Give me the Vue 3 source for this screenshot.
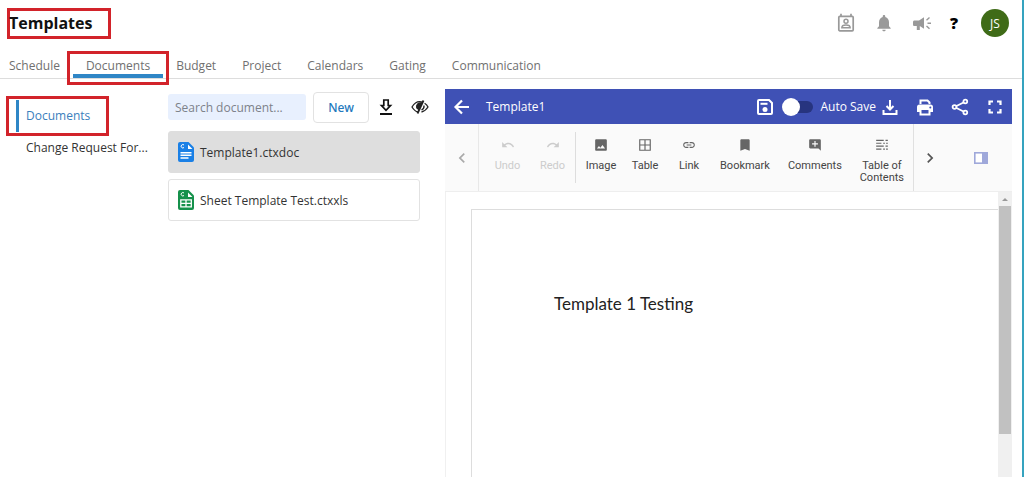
<script setup>
import { ref } from 'vue'

const tabs = ['Schedule', 'Documents', 'Budget', 'Project', 'Calendars', 'Gating', 'Communication']
const activeTab = ref('Documents')
const sections = ['Documents', 'Change Request For...']
const activeSection = ref('Documents')
const files = [
  { name: 'Template1.ctxdoc', type: 'doc' },
  { name: 'Sheet Template Test.ctxxls', type: 'sheet' },
]
const selected = ref('Template1.ctxdoc')
const search = ref('')
const autoSave = ref(false)

const history = [
  { label: 'Undo', path: 'M12.5 8c-2.65 0-5.05.99-6.9 2.6L2 7v9h9l-3.62-3.62c1.39-1.16 3.16-1.88 5.12-1.88 3.54 0 6.55 2.31 7.6 5.5l2.37-.78C21.08 11.03 17.15 8 12.5 8z' },
  { label: 'Redo', path: 'M18.4 10.6C16.55 8.99 14.15 8 11.5 8c-4.65 0-8.58 3.03-9.96 7.22L3.9 16c1.05-3.19 4.05-5.5 7.6-5.5 1.95 0 3.73.72 5.12 1.88L13 16h9V7l-3.6 3.6z' },
]
const tools = [
  { label: 'Image', narrow: true, path: 'M22 20V4c0-1.1-.9-2-2-2H4c-1.100 0-2 .9-2 2v16c0 1.100.9 2 2 2h16c1.100 0 2-.9 2-2zM8.500 13.500l2.500 3.010L14.500 12l4.500 6H5l3.500-4.500z' },
  { label: 'Table', narrow: true, path: 'M2 2h20v20H2V2zm2 2v7h7V4H4zm9 0v7h7V4h-7zm-9 9v7h7v-7H4zm9 0v7h7v-7h-7z' },
  { label: 'Link', narrow: true, path: 'M3.9 12c0-1.71 1.39-3.1 3.1-3.1h4V7H7c-2.76 0-5 2.24-5 5s2.24 5 5 5h4v-1.9H7c-1.71 0-3.1-1.39-3.1-3.1zM8 13h8v-2H8v2zm9-6h-4v1.9h4c1.71 0 3.1 1.39 3.1 3.1s-1.39 3.1-3.1 3.1h-4V17h4c2.76 0 5-2.24 5-5s-2.24-5-5-5z' },
  { label: 'Bookmark', path: 'M18 2H6c-1.100 0-2 .9-2 2v18l8-3 8 3V4c0-1.100-.9-2-2-2z' },
  { label: 'Comments', path: 'M22 4c0-1.1-.9-2-2-2H4c-1.1 0-2 .9-2 2v12c0 1.1.9 2 2 2h14l4 4V4zm-5 7h-4v4h-2v-4H7V9h4V5h2v4h4v2z' },
  { label: 'Table of Contents', path: 'M2 3h13v2H2zM2 8h9v2H2zM2 13h13v2H2zM2 18h9v2H2zM18 3h4v2h-4zM14 8h3v2h-3zM19 8h3v2h-3zM18 13h4v2h-4zM14 18h3v2h-3zM19 18h3v2h-3z' },
]
</script>

<template>
  <div class="app">
    <header class="top">
      <h1 class="title">Templates</h1>
      <div class="actions">
        <button type="button" aria-label="Contacts">
          <svg width="18" height="20" viewBox="0 0 18 20" fill="none" stroke="#999" stroke-width="1.7">
            <rect x="1.8" y="3.4" width="14.4" height="14.4" rx="1" />
            <path d="M4 0.8v3M14 0.8v3" />
            <circle cx="9" cy="8.2" r="2" stroke-width="1.5" />
            <path d="M4.8 14.7c0-3.6 8.4-3.6 8.4 0z" stroke-width="1.4" />
          </svg>
        </button>
        <button type="button" aria-label="Notifications">
          <svg width="20" height="20" viewBox="0 0 24 24" fill="#999"><path d="M12 22c1.1 0 2-.9 2-2h-4c0 1.1.9 2 2 2zm6-6v-5c0-3.07-1.63-5.64-4.5-6.32V4c0-.83-.67-1.5-1.5-1.5s-1.5.67-1.5 1.5v.68C7.64 5.36 6 7.92 6 11v5l-2 2v1h16v-1l-2-2z" /></svg>
        </button>
        <button type="button" aria-label="Announcements">
          <svg width="20" height="20" viewBox="0 0 20 20" fill="#999"><path d="M2.5 7.4H7l5-3.2v11.6L7.800 13v4H4.800v-4H2.500C1.600 13 1 12.300 1 11.400V9c0-.9.6-1.600 1.500-1.600z" /><path d="M14.500 7.200l3-2.700M15.500 10.200H19M14.500 13l3 2.700" stroke="#999" stroke-width="1.400" /></svg>
        </button>
        <button type="button" class="help" aria-label="Help">?</button>
        <button type="button" class="avatar" aria-label="Account">JS</button>
      </div>
    </header>

    <nav class="tabs" aria-label="Template types">
      <a v-for="t in tabs" :key="t" href="#" :class="{ active: t === activeTab }" @click.prevent="activeTab = t">{{ t }}</a>
    </nav>

    <main class="body">
      <nav class="side" aria-label="Sections">
        <a v-for="s in sections" :key="s" href="#" :class="{ active: s === activeSection }" @click.prevent="activeSection = s"><span>{{ s }}</span></a>
      </nav>

      <section class="list">
        <div class="list-bar">
          <input v-model="search" type="text" placeholder="Search document..." aria-label="Search document" />
          <button type="button" class="new">New</button>
          <button type="button" class="plain" aria-label="Import">
            <svg width="16" height="18" viewBox="0 0 16 18" fill="none" stroke="#111"><path d="M5.800 2h4.400v5.500h2.300L8 12.300 3.500 7.500h2.300z" stroke-width="1.700" /><path d="M2 16h12" stroke-width="2" /></svg>
          </button>
          <button type="button" class="plain" aria-label="Toggle hidden">
            <svg width="18" height="16" viewBox="0 0 18 16" fill="none" stroke="#222" stroke-width="1.300"><path d="M7 13C4.500 12.500 2.500 10.500 1 8c3-5 7.500-6 11-4.600M13.600 4.200C15.200 5.200 16.300 6.500 17 8c-1.500 2.600-3.500 4.200-6.500 5" /><path d="M12.500 1.500L6.500 14.500" stroke-width="1.800" /><path d="M10.500 4C7 3.500 5 6 5.800 9l1.800 1.500z" fill="#222" /><path d="M13 6.500c.3 2-.8 3.600-2.500 4.300" /></svg>
          </button>
        </div>
        <ul>
          <li v-for="f in files" :key="f.name">
            <button type="button" class="file" :class="{ selected: f.name === selected }" @click="selected = f.name">
              <svg width="18" height="20" viewBox="0 0 18 20">
                <path d="M3 0h8.500L17 5.500V18a2 2 0 0 1-2 2H3a2 2 0 0 1-2-2V2a2 2 0 0 1 2-2z" :fill="f.type === 'doc' ? '#1a80e6' : '#15914b'" />
                <path d="M11 2.600V7h4.400z" fill="#fff" />
                <path d="M7 3A1.700 1.700 0 1 0 7 5.500" fill="none" stroke="#fff" stroke-width="1" />
                <path v-if="f.type === 'doc'" d="M3.500 10.700h11M3.500 13.300h11M3.500 16h8" stroke="#fff" stroke-width="1.400" />
                <path v-else d="M3.800 9.800h10.500v7H3.800zM3.800 13.300h10.500M9 9.800v7" fill="none" stroke="#fff" stroke-width="1.300" />
              </svg>
              <span>{{ f.name }}</span>
            </button>
          </li>
        </ul>
      </section>

      <section class="editor">
        <div class="editor-head">
          <button type="button" aria-label="Back">
            <svg width="18" height="18" viewBox="0 0 18 18" fill="none" stroke="#fff" stroke-width="2.200"><path d="M16 9H3M9 2.500L2.500 9 9 15.500" /></svg>
          </button>
          <h2>Template1</h2>
          <button type="button" aria-label="Save">
            <svg width="18" height="18" viewBox="0 0 18 18" fill="none" stroke="#fff" stroke-width="2"><path d="M3 2h10l3 3v10a1 1 0 0 1-1 1H3a1 1 0 0 1-1-1V3a1 1 0 0 1 1-1z" /><path d="M4.500 5.800h7" /><circle cx="9" cy="11.500" r="2.500" fill="#fff" stroke="none" /></svg>
          </button>
          <label class="switch"><input v-model="autoSave" type="checkbox" /><span>Auto Save</span></label>
          <div class="head-actions">
            <button type="button" aria-label="Download">
              <svg width="18" height="18" viewBox="0 0 18 18" fill="none" stroke="#fff" stroke-width="2"><path d="M9 2v9M5.500 8L9 11.500 12.500 8M2.500 12v4h13v-4" /></svg>
            </button>
            <button type="button" aria-label="Print">
              <svg width="18" height="18" viewBox="0 0 18 18"><path d="M4.500 6V2.500h7l2 2V6" fill="none" stroke="#fff" stroke-width="2" /><path d="M3.500 6.500h11A2.500 2.500 0 0 1 17 9v5h-2.500v3.500h-11V14H1V9a2.500 2.500 0 0 1 2.500-2.500z" fill="#fff" /><path d="M5.500 12h7v3.500h-7z" fill="#3f51b5" /><circle cx="14.300" cy="9.500" r="1" fill="#3f51b5" /></svg>
            </button>
            <button type="button" aria-label="Share">
              <svg width="18" height="18" viewBox="0 0 18 18" fill="none" stroke="#fff" stroke-width="1.800"><path d="M13 4.300L5 8.200M5 9.800l8 4" /><circle cx="14.300" cy="3.500" r="1.900" /><circle cx="3.500" cy="9" r="1.900" /><circle cx="14.300" cy="14.500" r="1.900" /></svg>
            </button>
            <button type="button" aria-label="Full screen">
              <svg width="18" height="18" viewBox="0 0 18 18" fill="none" stroke="#fff" stroke-width="2.200"><path d="M3.500 7V3.500H7M11 3.500h3.500V7M14.500 11v3.500H11M7 14.500H3.500V11" /></svg>
            </button>
          </div>
        </div>

        <div class="toolbar">
          <button type="button" class="step prev" aria-label="Previous tools" disabled>
            <svg width="20" height="20" viewBox="0 0 24 24" fill="#aaa"><path d="M15.410 7.410L14 6l-6 6 6 6 1.410-1.410L10.830 12z" /></svg>
          </button>
          <div class="history">
            <button v-for="h in history" :key="h.label" type="button" class="tool narrow" disabled>
              <svg width="14" height="14" viewBox="0 0 24 24" fill="#ccc"><path :d="h.path" /></svg>
              <span>{{ h.label }}</span>
            </button>
          </div>
          <div class="tools">
            <button v-for="t in tools" :key="t.label" type="button" class="tool" :class="{ narrow: t.narrow }">
              <svg width="14" height="14" viewBox="0 0 24 24" fill="#666"><path :d="t.path" fill-rule="evenodd" /></svg>
              <span>{{ t.label }}</span>
            </button>
          </div>
          <button type="button" class="step next" aria-label="More tools">
            <svg width="20" height="20" viewBox="0 0 24 24" fill="#555"><path d="M10 6L8.590 7.410 13.170 12l-4.580 4.590L10 18l6-6z" /></svg>
          </button>
          <button type="button" class="pane" aria-label="Properties pane">
            <svg width="14" height="12" viewBox="0 0 14 12"><rect x=".8" y=".8" width="12.400" height="10.400" fill="#fff" stroke="#9fa8da" stroke-width="1.600" /><path d="M8 0h6v12H8z" fill="#9fa8da" /></svg>
          </button>
        </div>

        <div class="canvas">
          <article class="sheet"><p>Template 1 Testing</p></article>
          <div class="scroll">
            <svg width="14" height="14" viewBox="0 0 14 14"><path d="M4 9l3-3 3 3z" fill="#999" /></svg>
            <div class="track"><div class="thumb"></div></div>
          </div>
        </div>
      </section>
    </main>
  </div>
</template>

<style>
body { margin: 0; background: #fff; }
</style>

<style scoped>
.app {
  box-sizing: border-box;
  min-height: 100vh;
  display: flex;
  flex-direction: column;
  border-right: 2px solid #35a3bf;
  font-family: "Open Sans", "Noto Sans", sans-serif;
  font-size: 12px;
  color: #333;
}
button {
  flex: none;
  display: flex;
  align-items: center;
  justify-content: center;
  padding: 0;
  border: 0;
  background: none;
  font: inherit;
  color: inherit;
}
a { color: inherit; text-decoration: none; }
svg { flex: none; display: block; }

.top { display: flex; justify-content: space-between; align-items: flex-start; height: 53px; padding: 0 13px 0 7px; }
.title {
  box-sizing: border-box;
  width: 104px;
  margin: 8px 0 0;
  border: 3px solid #d2232a;
  font-size: 16px;
  line-height: 25px;
  color: #111;
  text-indent: -1px;
}
.actions { display: flex; align-items: center; gap: 18px; height: 46px; }
.actions button { width: 20px; height: 20px; }
.actions .help { width: 8px; font-weight: 800; font-size: 16px; color: #000; }
.actions .avatar { width: 28px; height: 28px; margin-left: 5px; border-radius: 50%; background: #3f6b17; color: #fff; }

.tabs { display: flex; gap: 26px; padding-left: 9px; border-bottom: 1px solid #ddd; color: #707070; }
.tabs a { position: relative; line-height: 25px; }
.tabs .active::before {
  content: "";
  position: absolute;
  inset: 21px -13px 0;
  background: #2f86c6;
}
.tabs .active::after {
  content: "";
  position: absolute;
  inset: -2px -19px -7px;
  border: 3px solid #d2232a;
}

.body { flex: 1; display: grid; grid-template-columns: 168px 252px minmax(0, 1fr); padding-right: 10px; }
.side { padding: 17px 20px 0 6px; }
.side a { display: block; padding-left: 20px; line-height: 24px; white-space: nowrap; }
.side .active {
  display: flex;
  box-sizing: border-box;
  width: 103px;
  height: 40px;
  padding: 1px 0 1px 7px;
  border: 3px solid #d2232a;
  color: #3a80bd;
}
.side .active span { padding-left: 7px; border-left: 3px solid #2f86c6; line-height: 32px; }

.list-bar { display: flex; align-items: center; margin-top: 12px; height: 32px; }
.list-bar input {
  box-sizing: border-box;
  width: 138px;
  height: 26px;
  margin-right: 7px;
  padding: 0 7px;
  border: 0;
  border-radius: 3px;
  background: #e8f0fe;
  font: inherit;
}
.list-bar input::placeholder { color: #7d828a; opacity: 1; }
.new { box-sizing: border-box; width: 56px; height: 31px; margin-right: 9px; border: 1px solid #e2e2e2; border-radius: 4px; color: #2479bd; font-family: "Noto Sans", sans-serif; font-weight: 500; }
.plain + .plain { margin-left: 17px; }
.list ul { display: grid; gap: 6px; margin: 8px 0 0; padding: 0; list-style: none; }
.file {
  box-sizing: border-box;
  width: 100%;
  height: 42px;
  justify-content: flex-start;
  gap: 5px;
  padding: 0 8px;
  border: 1px solid #e2e2e2;
  border-radius: 3px;
}
.file.selected { background: #dedede; border-color: #dedede; }

.editor { display: flex; flex-direction: column; margin: 10px 0 0 25px; }
.editor-head { display: flex; align-items: center; height: 35px; padding: 0 8px; background: #3f51b5; color: #fff; }
.editor-head h2 { margin: 0 auto 0 15px; font-size: 12px; font-weight: 400; line-height: 32px; }
.switch { display: flex; align-items: center; gap: 7px; margin: 0 5px 0 8px; }
.switch input {
  appearance: none;
  position: relative;
  width: 31px;
  height: 12px;
  margin: 0;
  border-radius: 6px;
  background: #27347f;
}
.switch input::before {
  content: "";
  position: absolute;
  top: -3px;
  left: 0;
  width: 18px;
  height: 18px;
  border-radius: 50%;
  background: #fff;
}
.switch input:checked::before { left: 13px; }
.head-actions { display: flex; gap: 17px; }

.toolbar {
  display: flex;
  height: 67px;
  border-bottom: 1px solid #eee;
  background: #fafafa;
  font-family: Roboto, sans-serif;
  font-size: 11px;
  color: #444;
}
.step { width: 34px; }
.prev { border-right: 1px solid #e8e8e8; }
.next { border-left: 1px solid #e0e0e0; }
.history { display: flex; margin: 8px 0; padding-left: 6px; border-right: 1px solid #ddd; color: #ccc; }
.tools { display: flex; margin: 8px 0; padding-left: 3px; }
.tool { flex-direction: column; justify-content: flex-start; gap: 8px; padding: 6px 9px 0; line-height: 12px; }
.tool.narrow { width: 45px; padding-inline: 0; }
.tools .tool.narrow { width: 44px; }
.tools .tool:last-child { width: 62px; }
.pane { margin: 0 24px 0 auto; }

.canvas { flex: 1; display: flex; min-height: 240px; border-left: 1px solid #f0f0f0; }
.sheet { flex: 1; margin: 17px 0 0 25px; padding: 82px 82px 0; border: 1px solid #ddd; border-width: 1px 0 0 1px; }
.sheet p { margin: 0; font-family: Lato, sans-serif; font-size: 17px; line-height: 24px; color: #222; }
.scroll { display: flex; flex-direction: column; width: 14px; background: #f0f0f0; }
.track { flex: 1; padding: 0 1px; }
.thumb { height: 84%; background: #c1c1c1; }
</style>
